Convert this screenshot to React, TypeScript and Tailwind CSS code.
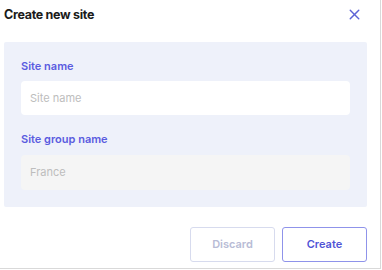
import { X } from "lucide-react";

export default function App() {
  return (
    <div className="h-[270px] w-[382px] bg-white font-['Inter',sans-serif]">
      <div className="flex h-[269px] w-[381px] flex-col border-b border-r border-[#d9d9d9] bg-white">
        <div className="flex h-[42px] items-start justify-between pl-[4px] pr-[17px] pt-[6px]">
          <h2 className="text-[12.5px] font-bold leading-[18px] tracking-[-0.3px] text-[#1b1b1b]">Create new site</h2>
          <X className="mt-[0px] h-[17px] w-[17px] text-[#5d63d6]" strokeWidth={2} />
        </div>

        <div className="ml-[4px] mr-[13px] flex h-[165px] flex-col rounded-[2px] bg-[#eef1fa] px-[17px] pt-[17px]">
          <label className="text-[11px] font-semibold leading-[14px] text-[#5a5ce0]">Site name</label>
          <div className="mt-[8px] flex h-[34px] items-center rounded-[4px] bg-white px-[9px] text-[11px] text-[#bdbdbd]">
            Site name
          </div>

          <label className="mt-[17px] text-[11px] font-semibold leading-[14px] text-[#5a5ce0]">Site group name</label>
          <div className="mt-[9px] flex h-[35px] items-center rounded-[4px] bg-[#f5f5f5] px-[9px] text-[11px] text-[#bdbdbd]">
            France
          </div>
        </div>

        <div className="mr-[13px] mt-[20px] flex justify-end gap-[7px]">
          <button className="h-[35px] w-[85px] rounded-[3px] border border-[#d7dbee] bg-white text-[11px] font-semibold text-[#b8bcd6]">
            Discard
          </button>
          <button className="h-[35px] w-[85px] rounded-[3px] border border-[#8f93ea] bg-white text-[11px] font-semibold text-[#4f54d6]">
            Create
          </button>
        </div>
      </div>
    </div>
  );
}
